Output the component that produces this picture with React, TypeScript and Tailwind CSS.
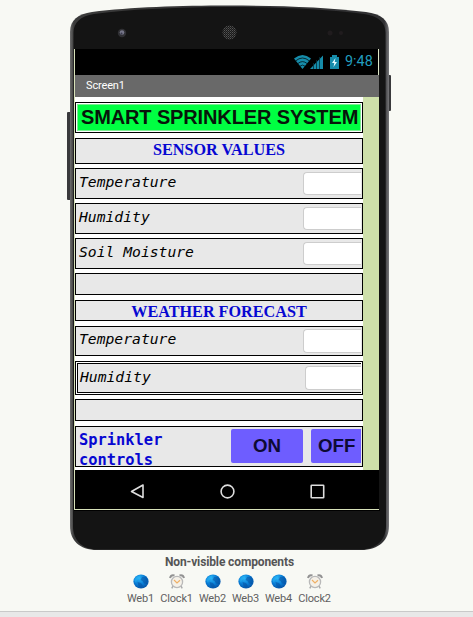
import type { ReactNode } from "react";

function PhoneFrame() {
  return (
    <svg className="absolute left-0 top-0" width="473" height="552" viewBox="0 0 473 552" aria-hidden="true">
      <defs>
        <linearGradient id="edge" x1="0" x2="1" y1="0" y2="0">
          <stop offset="0" stopColor="#6c6c6c" />
          <stop offset="0.012" stopColor="#3a3a3a" />
          <stop offset="0.985" stopColor="#303032" />
          <stop offset="1" stopColor="#77777a" />
        </linearGradient>
        <pattern id="mesh" width="2" height="2" patternUnits="userSpaceOnUse">
          <rect width="2" height="2" fill="#191919" />
          <rect width="1" height="1" fill="#555" />
          <rect x="1" y="1" width="1" height="1" fill="#3a3a3a" />
        </pattern>
      </defs>
      <rect x="67" y="112" width="4" height="88" rx="1" fill="#39393b" />
      <rect x="388" y="75" width="3" height="36" rx="1" fill="#39393b" />
      <path d="M70 32 C70 20 78 14 92 12 C130 7 180 5.500 229 5.500 C278 5.500 328 7 366 12 C381 14 389 20 389 32 L389 526 C389 540 379 550 361 550 L97 550 C79 550 70 540 70 526 Z" fill="url(#edge)" />
      <path d="M73.500 33 C73.500 22 81 16 94 14 C132 9 182 7 229 7 C276 7 326 9 364 14 C378 16 385.500 22 385.500 33 L386 526 C386 539 377 549.500 360 549.500 L98 549.500 C81 549.500 73 539 73 526 Z" fill="#141414" />
      <circle cx="122" cy="33" r="4.200" fill="#303034" />
      <circle cx="122" cy="32.500" r="2.300" fill="#77778a" />
      <circle cx="121.500" cy="33.500" r="1" fill="#3a3a4c" />
      <circle cx="229.500" cy="32.500" r="7" fill="url(#mesh)" />
      <circle cx="330" cy="33" r="2.500" fill="#201c1e" />
      <circle cx="341" cy="33" r="2" fill="#201c1e" />
    </svg>
  );
}

function StatusIcons() {
  return (
    <svg width="46" height="16" viewBox="0 0 46 16" aria-hidden="true">
      <path d="M0 4.500 Q8.500 -2.500 17 4.500 L8.500 15 Z" fill="#168caa" />
      <path d="M1.500 7 Q8.500 1 15.500 7 M3.700 9.700 Q8.500 5.500 13.300 9.700 M6 12.200 Q8.500 10 11 12.200" fill="none" stroke="#000" strokeWidth="0.700" />
      <path d="M16 15 L29 1.500 V15 Z" fill="#168caa" />
      <path d="M19.500 9 V15 M22.500 6 V15 M25.500 3 V15" stroke="#05303c" strokeWidth="0.800" />
      <path d="M36 3 h2 V1 h5 v2 h2 V15 H36 Z" fill="#168caa" />
      <path d="M41.500 4 L38 9 h2.300 l-.8 4 L43 8 h-2.300 Z" fill="#e5fbff" />
    </svg>
  );
}

function NavBar() {
  return (
    <div className="flex h-[39px] shrink-0 bg-black">
      <svg width="304" height="39" viewBox="0 0 304 39" fill="none" stroke="#dedede" strokeWidth="1.600" aria-hidden="true">
        <path d="M68 15 V27.500 L56.500 21.500 Z" strokeLinejoin="round" />
        <circle cx="152.500" cy="21.500" r="6.400" />
        <rect x="236.200" y="15.200" width="12.500" height="12.500" rx="0.500" />
      </svg>
    </div>
  );
}

function Field({
  label,
  className,
  textClass = "leading-[26px]",
  boxClass = "mt-[3px] h-[23px]",
}: {
  label: string;
  className: string;
  textClass?: string;
  boxClass?: string;
}) {
  return (
    <div className={`flex shrink-0 justify-between overflow-hidden border border-black bg-[#e8e8e8] pr-px ${className}`}>
      <span className={`pl-[3px] font-['DejaVu_Sans_Mono',monospace] text-[14.7px] italic text-black ${textClass}`}>{label}</span>
      <span className={`w-[58px] rounded-l-[4px] border border-r-0 border-[#cdcdcd] bg-white ${boxClass}`} />
    </div>
  );
}

function Heading({ children, className }: { children: ReactNode; className: string }) {
  return (
    <div className={`shrink-0 whitespace-nowrap border border-black bg-[#e8e8e8] text-center font-['Liberation_Serif',serif] text-[16.2px] font-bold text-[#0707d2] ${className}`}>
      {children}
    </div>
  );
}

function Spacer({ className }: { className: string }) {
  return <div className={`h-[22px] shrink-0 border border-black bg-[#e8e8e8] ${className}`} />;
}

function AppScreen() {
  return (
    <div className="flex h-[373px] w-[304px] shrink-0 bg-[#cee0aa]">
      <div className="flex w-[288px] flex-col bg-white pt-[5px]">
        <div className="h-[31px] shrink-0 border border-black bg-white p-px">
          <div className="h-full whitespace-nowrap border border-[#79ef91] bg-[#00ff42] pl-[3px] font-['Liberation_Sans',sans-serif] text-[20px] font-bold leading-[24px] tracking-[-0.13px] text-[#07150a]">
            SMART SPRINKLER SYSTEM
          </div>
        </div>
        <Heading className="mt-[5px] h-[26px] leading-[22px]">SENSOR VALUES</Heading>
        <Field className="mt-[4px] h-[31px]" label="Temperature" />
        <Field className="mt-[4px] h-[31px]" label="Humidity" />
        <Field className="mt-[4px] h-[31px]" label="Soil Moisture" />
        <Spacer className="mt-[4px]" />
        <Heading className="mt-[5px] h-[21px] leading-[22px]">WEATHER FORECAST</Heading>
        <Field className="mt-[5px] h-[30px]" label="Temperature" textClass="leading-[24px]" boxClass="mt-[2px] h-[24px]" />
        <div className="mt-[5px] h-[34px] shrink-0 border border-black bg-white py-px pl-px pr-px">
          <div className="flex h-full justify-between border border-r-0 border-black bg-[#e8e8e8]">
            <span className="pl-[2px] font-['DejaVu_Sans_Mono',monospace] text-[14.7px] italic leading-[25px] text-black">Humidity</span>
            <span className="mt-[2px] h-[24px] w-[56px] rounded-l-[4px] border border-r-0 border-[#cdcdcd] bg-white" />
          </div>
        </div>
        <Spacer className="mt-[4px]" />
        <div className="mt-[5px] flex h-[41px] shrink-0 border border-black bg-[#e8e8e8] pr-px">
          <span className="w-[155px] shrink-0 pl-[3px] pt-[3px] font-['DejaVu_Sans_Mono',monospace] text-[15.4px] font-bold leading-[20px] text-[#0707d2]">
            Sprinkler
            <br />
            controls
          </span>
          <span className="mt-[2px] h-[34px] w-[72px] shrink-0 rounded-[2px] bg-[#6e5dff] text-center font-['Liberation_Sans',sans-serif] text-[18.7px] font-bold leading-[33px] text-[#0d0a35]">ON</span>
          <span className="ml-2 mt-[2px] h-[34px] w-[50px] shrink-0 rounded-l-[2px] bg-[#6e5dff] pl-[7px] font-['Liberation_Sans',sans-serif] text-[18.7px] font-bold leading-[33px] text-[#0d0a35]">OFF</span>
        </div>
      </div>
    </div>
  );
}

function Globe() {
  return (
    <svg width="16" height="15" viewBox="0 0 16 15" aria-hidden="true">
      <defs>
        <radialGradient id="globe" cx="0.4" cy="0.3" r="0.7">
          <stop offset="0" stopColor="#29b0f5" />
          <stop offset="0.6" stopColor="#087bd4" />
          <stop offset="1" stopColor="#0755a8" />
        </radialGradient>
      </defs>
      <ellipse cx="8" cy="7.500" rx="7.600" ry="7" fill="url(#globe)" />
      <path d="M9 3 L13 2.500 L15 6 L14 10 L11 9.500 L9.500 7 L7.500 6 Z M4.500 8 L8 9 L10 12 L8 14 L5.500 12 Z" fill="#064e9e" opacity="0.55" />
      <path d="M1 6 Q4 1 8 1.500 L7 4 L4 6 L3 9 Z" fill="#30c0fa" opacity="0.4" />
    </svg>
  );
}

function Clock() {
  return (
    <svg width="16" height="15" viewBox="0 0 16 15" fill="none" aria-hidden="true">
      <path d="M1 4 Q2 0.500 5.500 1.500 M10.500 1.500 Q14 0.500 15 4" stroke="#929292" strokeWidth="2" />
      <path d="M4 12 L2.800 14.300 M12 12 L13.200 14.300" stroke="#aaa" strokeWidth="1.500" />
      <circle cx="8" cy="8" r="5.600" fill="#f5f1e8" stroke="#b9b9b9" strokeWidth="1.300" />
      <path d="M5 6 L8 9 L11 6.300" stroke="#efb066" strokeWidth="1.200" />
    </svg>
  );
}

const components = [
  { name: "Web1", width: "w-[27px]" },
  { name: "Clock1", width: "w-[33px]" },
  { name: "Web2", width: "w-[27px]" },
  { name: "Web3", width: "w-[27px]" },
  { name: "Web4", width: "w-[27px]" },
  { name: "Clock2", width: "w-[33px]" },
];

export default function App() {
  return (
    <div className="relative flex h-[617px] w-[473px] flex-col overflow-hidden bg-[#f8f9f4]">
      <PhoneFrame />
      <div className="relative ml-[74px] mt-[49px] flex h-[462px] w-[306px] shrink-0 flex-col border-b border-black">
        <div className="flex h-[461px] w-[305px] flex-col border-b border-l border-[#d7e1b9] bg-black">
          <div className="flex h-[26px] shrink-0 items-center justify-end border-r border-[#dfe8c8] pr-[5px]">
            <StatusIcons />
            <span className="ml-[5px] w-[28px] whitespace-nowrap font-[Roboto,sans-serif] text-[14.4px] leading-[26px] text-[#219dbe]">9:48</span>
          </div>
          <div className="h-[22px] shrink-0 bg-[#696969] pl-[11px] font-[Roboto,sans-serif] text-[11px] leading-[21px] tracking-[-0.15px] text-white">Screen1</div>
          <AppScreen />
          <NavBar />
        </div>
      </div>
      <div className="mt-[43px] flex shrink-0 flex-col">
        <div className="ml-[165px] whitespace-nowrap font-[Roboto,sans-serif] text-[12px] font-bold leading-[16px] tracking-[-0.13px] text-[#555]">Non-visible components</div>
        <div className="ml-[127px] mt-[4px] flex gap-[6px]">
          {components.map(({ name, width }) => (
            <div key={name} className={`flex shrink-0 flex-col items-center ${width}`}>
              {name.startsWith("Web") ? <Globe /> : <Clock />}
              <span className="mt-[3px] whitespace-nowrap font-[Roboto,sans-serif] text-[11px] leading-[14px] tracking-[-0.15px] text-[#606060]">{name}</span>
            </div>
          ))}
        </div>
      </div>
      <div className="mt-auto h-[6px] shrink-0 border-t border-[#c9c9c9] bg-[#e8e8e8]" />
    </div>
  );
}
